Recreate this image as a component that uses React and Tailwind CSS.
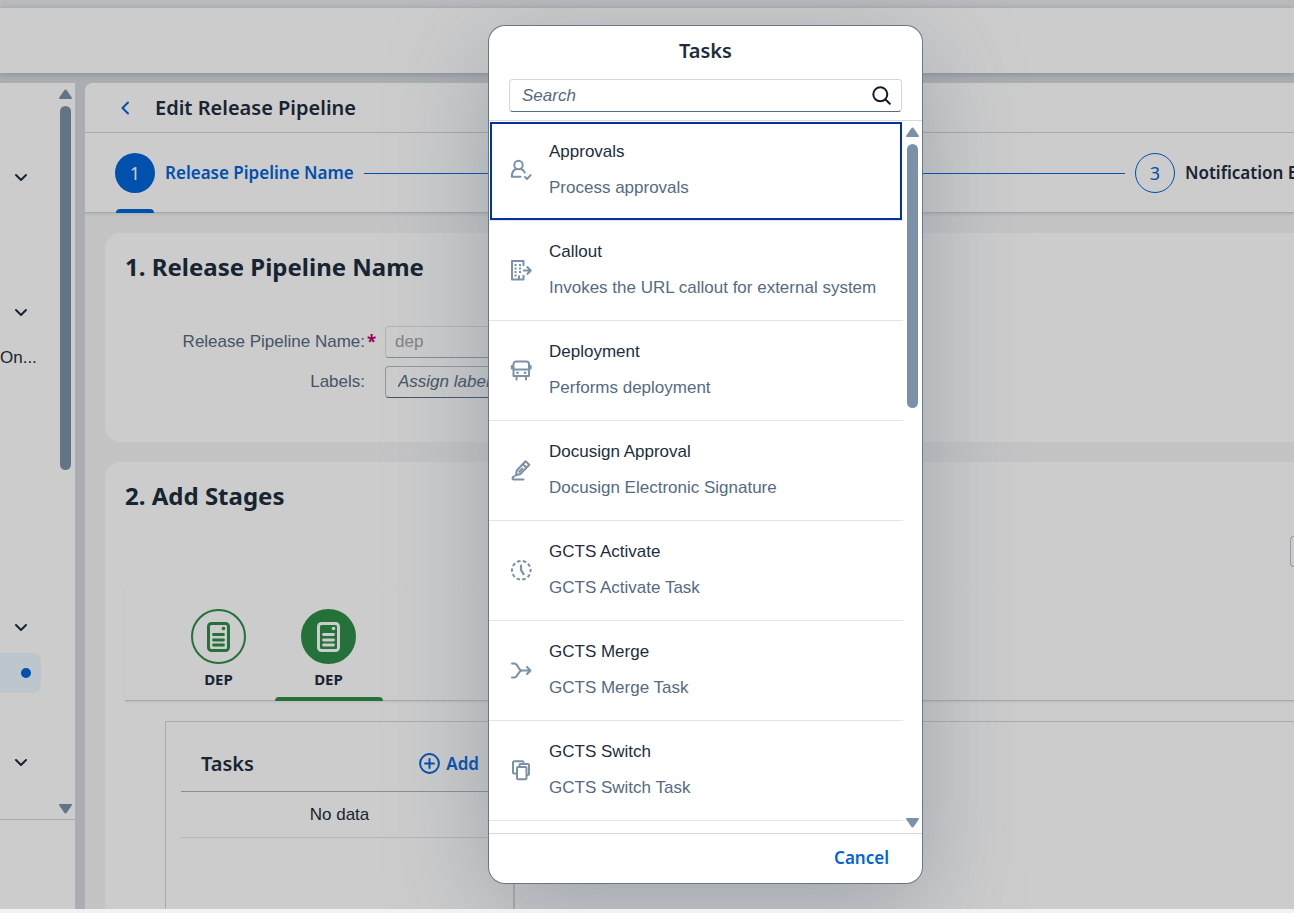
const BOLD = "font-['Noto_Sans',sans-serif]";

const navRows = [
  {},
  { chevron: true },
  {},
  {},
  { chevron: true },
  { text: "On..." },
  {},
  {},
  {},
  {},
  {},
  { chevron: true },
  { selected: true },
  {},
  { chevron: true },
];

const line = {
  fill: "none",
  stroke: "currentColor",
  strokeWidth: 2,
  strokeLinecap: "round",
  strokeLinejoin: "round",
};

const taskIcons = {
  approvals: (
    <g {...line}>
      <circle cx="7.500" cy="5" r="4.200" />
      <path d="M5 9C2 10.300.800 13 .8 16.800h8.700M10.200 9c1.700.8 2.900 2 3.600 3.500M14 17l2 2 3.600-3.900" />
    </g>
  ),
  callout: (
    <g {...line} strokeLinecap="butt">
      <path d="M12.500 6V1H1v18.500h11.500v-4.500M8 19.500v-4" />
      <path d="M12 10.500h7.500M15.800 6.500l4 4-4 4" />
      <path d="M3.500 5h2M8 5h2M3.500 8.500h2M8 8.500h2M3.500 12h2M8 12h2M3.500 15.500h2" />
    </g>
  ),
  deployment: (
    <g {...line}>
      <path d="M2.500 16V4A2.500 2.500 0 0 1 5 1.500h10.500A2.500 2.500 0 0 1 18 4v12zM2.500 9.500h15.500M.800 6v2.500M19.700 6v2.500M5.500 16.500v3M15 16.500v3" />
      <path d="M6.500 12.800h.1M14 12.800h.1" strokeWidth="2.600" />
    </g>
  ),
  docusign: (
    <g {...line}>
      <path d="M14.500 1.200l3.800 3.600-9 9.200-4.300 1.200.8-4.700zM11.800 4l3.600 3.600M8.300 11.800l3-3.200" />
      <path d="M3.500 16.200c-2.600.6-2.600 3.400 0 3.400h9" />
    </g>
  ),
  activate: (
    <g {...line}>
      <circle cx="10.300" cy="10.300" r="9.300" strokeDasharray="3.540 2.300" strokeDashoffset="1.700" strokeLinecap="butt" />
      <path d="M10 5.500v4.500l2.600 4.200" strokeWidth="2.200" />
    </g>
  ),
  merge: (
    <g {...line}>
      <path d="M1 3.500h2c4.500 0 4 7 8 7M1 17.500h2c4.500 0 4-7 8-7h8.500M16 7l3.500 3.500-3.500 3.500" />
    </g>
  ),
  switch: (
    <g {...line}>
      <path d="M4.500 13.500h-1.500a1 1 0 0 1-1-1V2.300a1 1 0 0 1 1-1h8.500a1 1 0 0 1 1 1M8.500 6V5a1 1 0 0 1 1-1h7.500a1 1 0 0 1 1 1V14a1 1 0 0 1-1 1h-1" />
      <rect x="6" y="7" width="9.500" height="12.300" rx="1" />
    </g>
  ),
};

const tasks = [
  { icon: "approvals", title: "Approvals", text: "Process approvals", focused: true },
  { icon: "callout", title: "Callout", text: "Invokes the URL callout for external system" },
  { icon: "deployment", title: "Deployment", text: "Performs deployment" },
  { icon: "docusign", title: "Docusign Approval", text: "Docusign Electronic Signature" },
  { icon: "activate", title: "GCTS Activate", text: "GCTS Activate Task" },
  { icon: "merge", title: "GCTS Merge", text: "GCTS Merge Task" },
  { icon: "switch", title: "GCTS Switch", text: "GCTS Switch Task" },
];

function ChevronDown() {
  return (
    <svg width="14" height="10" viewBox="0 0 14 10" aria-hidden="true">
      <path d="M2 2l5 5 5-5" {...line} />
    </svg>
  );
}

function Arrow({ down }) {
  return (
    <svg width="13" height="10" viewBox="0 0 13 10" className="shrink-0" fill="#7b91a8" aria-hidden="true">
      <path
        d={
          down
            ? "M.8 0h11.400c.8 0 1 .8.5 1.500L7.700 8.800c-.6.900-1.800.900-2.400 0L.3 1.500C-.2.8 0 0 .8 0z"
            : "M.8 10h11.400c.8 0 1-.8.5-1.500L7.700 1.200c-.6-.9-1.800-.9-2.400 0L.3 8.500c-.5.700-.3 1.500.5 1.500z"
        }
      />
    </svg>
  );
}

function ScrollTrack({ thumb }) {
  return (
    <div className="flex w-[19px] shrink-0 flex-col items-center gap-[7px] pt-[6px] pb-[5px]">
      <Arrow />
      <div className="min-h-0 flex-1">
        <div className={"w-[11px] rounded-full bg-[#7b91a8] " + thumb} />
      </div>
      <Arrow down />
    </div>
  );
}

function Sidebar() {
  return (
    <nav className="flex w-[75px] shrink-0 flex-col bg-white" aria-label="Main">
      <div className="flex h-[737px] shrink-0 border-b border-[#d9d9d9]">
        <ul className="min-w-0 flex-1 overflow-hidden pt-[27px]">
          {navRows.map((row, i) => (
            <li key={i} className="flex h-[45px] items-center">
              {row.chevron && (
                <button type="button" aria-label="Expand" className="ml-[14px] flex h-8 items-center">
                  <ChevronDown />
                </button>
              )}
              {row.text && (
                <a href="#on" className="text-[17px]">
                  {row.text}
                </a>
              )}
              {row.selected && (
                <a
                  href="#current"
                  aria-label="Current page"
                  className="flex h-10 w-[41px] items-center justify-end rounded-r-lg bg-[#ebf8ff] pr-[10px]"
                >
                  <span className="size-[10px] rounded-full bg-[#0064d9]" />
                </a>
              )}
            </li>
          ))}
        </ul>
        <ScrollTrack thumb="h-[364px]" />
      </div>
    </nav>
  );
}

function Wizard() {
  return (
    <ol className="relative flex h-20 shrink-0 items-center gap-[10px] border-b border-[#d0d2d4] bg-white pt-px pl-[30px] shadow-[0_1px_3px_rgba(34,53,72,0.15)]">
      <li className="relative flex h-20 items-center gap-[10px] text-[#0064d9]">
        <span className={BOLD + " flex size-10 items-center justify-center rounded-full bg-[#0064d9] text-[18px] text-white"}>1</span>
        <span className={BOLD + " text-[17px] font-semibold whitespace-nowrap"}>Release Pipeline Name</span>
        <span className="absolute bottom-0 left-px h-1 w-[38px] rounded-t-sm bg-[#0064d9]" />
      </li>
      <li className="h-px flex-1 bg-[#0064d9]" aria-hidden="true" />
      <li className="flex items-center gap-[10px]">
        <span className={BOLD + " flex size-10 items-center justify-center rounded-full border border-[#0064d9] text-[18px] text-[#0064d9]"}>3</span>
        <span className={BOLD + " w-[109px] text-[17px] font-semibold whitespace-nowrap"}>Notification E</span>
      </li>
    </ol>
  );
}

function StageIcon() {
  return (
    <svg width="23" height="30" viewBox="0 0 23 30" aria-hidden="true">
      <rect x="1.500" y="1.500" width="20" height="27" rx="3" fill="none" stroke="currentColor" strokeWidth="3" />
      <circle cx="16.500" cy="6.500" r="1.800" fill="currentColor" />
      <path d="M6.500 12.500h10M6.500 18h10M6.500 23h10" stroke="currentColor" strokeWidth="2.800" strokeLinecap="round" />
    </svg>
  );
}

function Stage({ active }) {
  return (
    <button type="button" role="tab" aria-selected={!!active} className="relative flex w-[111px] flex-col items-center">
      <span
        className={
          "flex size-[55px] items-center justify-center rounded-full border-2 border-[#2d8e48] " +
          (active ? "bg-[#2d8e48] text-white" : "text-[#2d8e48]")
        }
      >
        <StageIcon />
      </span>
      <span className={BOLD + " mt-[5px] text-[15px] leading-[20px] font-bold"}>DEP</span>
      {active && <span className="absolute -bottom-px left-0.5 h-1 w-[108px] rounded-t-sm bg-[#2d8e48]" />}
    </button>
  );
}

function Stages() {
  return (
    <section className="flex flex-1 flex-col rounded-tl-2xl bg-white pt-[19px] pl-5">
      <h2 className={BOLD + " text-[24px] leading-[30px] font-bold"}>2. Add Stages</h2>
      <div className="mt-[25px] flex justify-end">
        <button type="button" aria-label="Options" className="h-[31px] w-1 rounded-l-lg border border-r-0 border-[#bcc3ca]" />
      </div>
      <div
        role="tablist"
        className="mt-[22px] flex h-[112px] shrink-0 -space-x-px border-b border-[#d0d2d4] pt-5 pl-[38px] shadow-[0_1px_2px_rgba(34,53,72,0.1)]"
      >
        <Stage />
        <Stage active />
      </div>
      <div className="mt-5 ml-10 flex flex-1 border-t border-l border-[#d4d7da]">
        <div className="w-[349px] border-r-2 border-[#d4d7da] px-[15px] pt-[14px]">
          <div className="flex h-14 items-center justify-between border-b border-[#a9b4be] pr-[19px] pl-5">
            <h3 className={BOLD + " text-[20px] font-semibold"}>Tasks</h3>
            <button type="button" className={BOLD + " flex items-center gap-[6px] text-[17px] text-[#0064d9]"}>
              <svg width="21" height="21" viewBox="0 0 21 21" aria-hidden="true">
                <path d="M10.500 6v9M6 10.500h9" {...line} />
                <circle cx="10.500" cy="10.500" r="9.400" {...line} />
              </svg>
              <span className="font-semibold">Add</span>
            </button>
          </div>
          <div className="flex h-[46px] items-center justify-center border-b border-[#e0e2e4] text-[17px]">No data</div>
        </div>
      </div>
    </section>
  );
}

function TaskDialog() {
  return (
    <div
      role="dialog"
      aria-modal="true"
      aria-label="Tasks"
      className="flex w-[433px] flex-col overflow-hidden rounded-2xl bg-white shadow-[0_25px_100px_0_rgba(91,108,125,0.4),0_0_0_1px_#6d7a88]"
    >
      <header className="shrink-0 border-b border-[#d9d9d9] px-5 pb-2">
        <h2 className={BOLD + " h-[53px] pt-[10px] text-center text-[20px] leading-[30px] font-semibold"}>Tasks</h2>
        <div className="flex h-[33px] items-center rounded border border-[#d0d7de] border-b-[#556b81] pr-[10px] pl-3">
          <input
            type="search"
            aria-label="Search tasks"
            placeholder="Search"
            className="min-w-0 flex-1 bg-transparent text-[17px] italic outline-none placeholder:text-[#556b82]"
          />
          <button type="button" aria-label="Search">
            <svg width="19" height="19" viewBox="0 0 19 19" className="text-[#131e29]" aria-hidden="true">
              <circle cx="8.300" cy="8.300" r="7" {...line} />
              <path d="M13.500 13.500l4.300 4.300" {...line} />
            </svg>
          </button>
        </div>
      </header>
      <div className="flex min-h-0 flex-1">
        <ul className="min-w-0 flex-1 overflow-hidden">
          {tasks.map((task) => (
            <li key={task.title} className="h-[100px] border-b border-[#e5e5e5] pt-px pr-px pl-px">
              <button
                type="button"
                className={
                  "flex h-full w-full gap-4 pl-5 text-left " +
                  (task.focused ? "outline-2 -outline-offset-2 outline-[#0032a5]" : "")
                }
              >
                <svg width="23" height="23" viewBox="-1 -1 23 23" className="mt-[37px] shrink-0 text-[#7b91a8]" aria-hidden="true">
                  {taskIcons[task.icon]}
                </svg>
                <span className="flex flex-col gap-3 pt-[18px] text-[17px] leading-6">
                  <span>{task.title}</span>
                  <span className="whitespace-nowrap text-[#556b82]">{task.text}</span>
                </span>
              </button>
            </li>
          ))}
        </ul>
        <ScrollTrack thumb="h-[264px]" />
      </div>
      <footer className="flex h-[50px] shrink-0 items-center justify-end border-t border-[#d9d9d9] pr-[33px] pb-0.5">
        <button type="button" className={BOLD + " text-[17px] font-semibold text-[#0064d9]"}>
          Cancel
        </button>
      </footer>
    </div>
  );
}

export default function App() {
  return (
    <div className="flex h-screen flex-col bg-[#f2f2f2] font-['Liberation_Sans',Arial,sans-serif] text-[#1d2d3e]">
      <div className="relative flex min-h-0 flex-1 flex-col overflow-hidden bg-[#d5dadf]">
        <div className="h-2 shrink-0 bg-[#e8eaed]" />
        <header className="h-[65px] shrink-0 bg-white shadow-[0_1px_6px_rgba(34,53,72,0.25)]" />
        <div className="flex min-h-0 flex-1 gap-[10px] pt-[10px]">
          <Sidebar />
          <main className="flex min-w-0 flex-1 flex-col overflow-hidden rounded-tl-lg bg-[#f5f6f7]">
            <header className="flex h-[50px] shrink-0 items-center gap-6 border-b border-[#d9d9d9] bg-white pl-[34px]">
              <button type="button" aria-label="Back" className="flex h-8 w-3 items-center justify-center text-[#0064d9]">
                <svg width="10" height="15" viewBox="0 0 10 15" aria-hidden="true">
                  <path d="M8 2.500l-5.500 5.500 5.500 5.500" {...line} />
                </svg>
              </button>
              <h1 className={BOLD + " text-[20px] font-semibold"}>Edit Release Pipeline</h1>
            </header>
            <Wizard />
            <div className="flex min-h-0 flex-1 flex-col gap-5 pt-5 pl-5">
              <section className="h-[209px] shrink-0 rounded-l-2xl bg-white pt-[19px] pl-5">
                <h2 className={BOLD + " text-[24px] leading-[30px] font-bold"}>1. Release Pipeline Name</h2>
                <form className="mt-11 grid grid-cols-[240px_230px] gap-x-5 gap-y-2 text-[17px] leading-8 text-[#556b82]">
                  <label htmlFor="pipeline" className="relative text-right">
                    Release Pipeline Name:
                    <span className={BOLD + " absolute left-full pl-[2px] text-[17px] font-bold text-[#ba066c]"}>*</span>
                  </label>
                  <input
                    id="pipeline"
                    disabled
                    defaultValue="dep"
                    className="h-8 rounded border border-[#dde1e5] border-b-[#a3aeb8] px-[9px] text-[#a0a4a8]"
                  />
                  <label htmlFor="labels" className="text-right">
                    Labels:
                  </label>
                  <input
                    id="labels"
                    placeholder="Assign labels"
                    className="h-8 rounded border border-[#b4bec8] border-b-[#556b81] px-3 italic placeholder:text-[#556b82]"
                  />
                </form>
              </section>
              <Stages />
            </div>
          </main>
        </div>
        <div className="absolute inset-0 flex justify-center bg-black/20 pt-[26px] pb-[26px] pl-[117px]">
          <TaskDialog />
        </div>
      </div>
      <div className="h-1 shrink-0" />
    </div>
  );
}
